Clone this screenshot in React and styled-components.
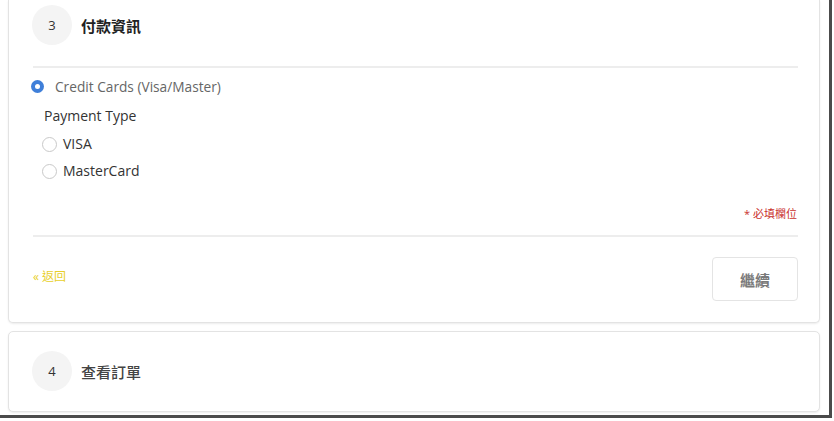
import React from "react";
import styled, { createGlobalStyle } from "styled-components";

const Global = createGlobalStyle`
  html, body { margin: 0; padding: 0; background: #ffffff; }
  body { font-family: "Open Sans", "Noto Sans CJK TC", sans-serif; color: #333; }
  * { box-sizing: border-box; }
`;

const Frame = styled.div`
  width: 832px;
  height: 418px;
  border-right: 3px solid #4b4b4b;
  border-bottom: 3px solid #4b4b4b;
  overflow: hidden;
  padding: 0 0 0 8px;
  display: flex;
  flex-direction: column;
  gap: 8px;
  background: #fff;
`;

const Card = styled.section`
  flex-shrink: 0;
  width: 812px;
  background: #fff;
  border: 1px solid #e3e3e3;
  border-top: ${(p) => (p.$cropped ? "none" : "1px solid #e3e3e3")};
  border-radius: ${(p) => (p.$cropped ? "0 0 5px 5px" : "5px")};
  box-shadow: 0 1px 2px rgba(0, 0, 0, 0.08);
  padding: ${(p) => p.$pad};
`;

const StepHeader = styled.div`
  display: flex;
  align-items: center;
  gap: 9px;
  height: 40px;
`;

const StepNum = styled.div`
  width: 40px;
  height: 40px;
  border-radius: 50%;
  background: #f4f4f4;
  display: flex;
  align-items: center;
  justify-content: center;
  font-size: 13px;
  color: #333;
  margin-left: -1px;
`;

const StepTitle = styled.h2`
  margin: 0;
  font-size: 15px;
  font-weight: ${(p) => (p.$active ? 700 : 500)};
  color: ${(p) => (p.$active ? "#222" : "#444")};
`;

const Divider = styled.hr`
  margin: ${(p) => p.$margin};
  border: none;
  border-top: 2px solid #ededed;
  height: 0;
`;

const MethodRow = styled.label`
  display: flex;
  align-items: center;
  gap: 11px;
  margin-left: -2px;
  height: 14px;
  font-size: 13.7px;
  color: #666;
`;

const CheckedRadio = styled.span`
  width: 13px;
  height: 13px;
  border-radius: 50%;
  background: #3f7fd9;
  display: flex;
  align-items: center;
  justify-content: center;
  &::after {
    content: "";
    width: 5px;
    height: 5px;
    border-radius: 50%;
    background: #fff;
  }
`;

const TypeBlock = styled.div`
  padding-left: 9px;
  display: flex;
  flex-direction: column;
`;

const TypeLabel = styled.div`
  font-size: 14px;
  color: #333;
  height: 20px;
  line-height: 20px;
  margin: 13px 0 4px 2px;
`;

const OptionRow = styled.label`
  display: flex;
  align-items: center;
  gap: 6px;
  height: 27px;
  font-size: 14px;
  color: #333;
`;

const EmptyRadio = styled.span`
  width: 15px;
  height: 15px;
  border-radius: 50%;
  border: 1px solid #c9c9c9;
  background: #fff;
  margin-top: 1px;
`;

const Required = styled.div`
  text-align: right;
  font-size: 11px;
  color: #c9302c;
  margin-top: 23px;
  padding-right: 1px;
  height: 14px;
  line-height: 14px;
`;

const Footer = styled.div`
  display: flex;
  align-items: center;
  justify-content: space-between;
`;

const BackLink = styled.a`
  font-size: 12px;
  color: #e8cf2a;
  text-decoration: none;
  margin-top: -7px;
`;

const ContinueButton = styled.button`
  width: 86px;
  height: 44px;
  border: 1px solid #e4e4e4;
  border-radius: 4px;
  background: #fff;
  font-family: "Noto Sans CJK TC", sans-serif;
  font-size: 15px;
  font-weight: 700;
  color: #7a7a7a;
  padding: 0;
`;

export default function App() {
  return (
    <>
      <Global />
      <Frame>
        <Card $cropped $pad="5px 21px 21px 24px">
          <StepHeader>
            <StepNum>3</StepNum>
            <StepTitle $active>付款資訊</StepTitle>
          </StepHeader>
          <Divider $margin="21px 0 11px" />
          <MethodRow>
            <CheckedRadio />
            Credit Cards (Visa/Master)
          </MethodRow>
          <TypeBlock>
            <TypeLabel>Payment Type</TypeLabel>
            <OptionRow>
              <EmptyRadio />
              VISA
            </OptionRow>
            <OptionRow>
              <EmptyRadio />
              MasterCard
            </OptionRow>
          </TypeBlock>
          <Required>* 必填欄位</Required>
          <Divider $margin="14px 0 20px" />
          <Footer>
            <BackLink href="#">« 返回</BackLink>
            <ContinueButton>繼續</ContinueButton>
          </Footer>
        </Card>
        <Card $pad="19px 21px 20px 24px">
          <StepHeader>
            <StepNum>4</StepNum>
            <StepTitle>查看訂單</StepTitle>
          </StepHeader>
        </Card>
      </Frame>
    </>
  );
}
